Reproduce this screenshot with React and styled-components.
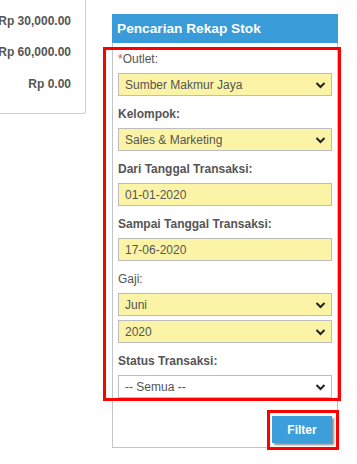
import React from 'react';
import styled, { createGlobalStyle } from 'styled-components';

const GlobalStyle = createGlobalStyle`
  body {
    margin: 0;
    background: #fff;
    font-family: "Liberation Sans", Arial, sans-serif;
  }
`;

const Page = styled.div`
  display: flex;
  align-items: flex-start;
  width: 357px;
  height: 464px;
  overflow: hidden;
`;

const Summary = styled.div`
  flex-shrink: 0;
  width: 125px;
  margin-left: -40px;
  height: 113px;
  border-right: 1px solid #cfcfcf;
  border-bottom: 1px solid #cfcfcf;
  border-bottom-right-radius: 3px;
`;

const Amount = styled.div`
  text-align: right;
  white-space: nowrap;
  padding-right: 14px;
  font-size: 12px;
  font-weight: 700;
  color: #555;
  line-height: 14px;
  margin-top: ${p => p.$top}px;
`;

const Panel = styled.div`
  flex-shrink: 0;
  margin-left: 26px;
  margin-top: 14px;
  width: 226px;
`;

const Header = styled.div`
  background: #3a9bd9;
  height: 29px;
  display: flex;
  align-items: center;
  padding-left: 5px;
  color: #fff;
  font-size: 13.7px;
  font-weight: 700;
`;

const Body = styled.div`
  border: 1px solid #c4c4c4;
  border-top: none;
  display: flex;
  flex-direction: column;
`;

const Highlight = styled.div`
  border: 3px solid #ff0000;
  margin: 4px -4px 0 -10px;
  padding: 1px 6px 0 12px;
  display: flex;
  flex-direction: column;
`;

const Field = styled.div`
  display: flex;
  flex-direction: column;
  margin-bottom: ${p => (p.$last ? 0 : 10)}px;
`;

const Label = styled.div`
  font-size: 12px;
  line-height: 16px;
  height: 16px;
  font-weight: ${p => (p.$bold ? 700 : 400)};
  color: #555;
  margin-bottom: 6px;
`;

const Star = styled.span`
  color: #e5532d;
`;

const SelectBox = styled.div`
  display: flex;
  align-items: center;
  justify-content: space-between;
  height: 23px;
  box-sizing: border-box;
  border: 1px solid #bdbdbd;
  background: ${p => (p.$plain ? '#fff' : '#fbf4a6')};
  padding: 0 5px 0 6px;
  font-size: 12px;
  color: #555;
  margin-bottom: ${p => p.$gap || 0}px;
`;

const TextInput = styled.input`
  height: 23px;
  box-sizing: border-box;
  border: 1px solid #bdbdbd;
  background: #fbf4a6;
  padding: 0 6px;
  font-family: inherit;
  font-size: 12px;
  color: #555;
  outline: none;
  width: 100%;
`;

const Footer = styled.div`
  display: flex;
  justify-content: flex-end;
`;

const ButtonFrame = styled.div`
  border: 3px solid #ff0000;
  margin: 9px -2px -3px 0;
  padding: 3px 4px 4px 2px;
  display: flex;
`;

const Button = styled.button`
  width: 60px;
  height: 27px;
  border: none;
  background: #3d9edc;
  color: #fff;
  font-family: inherit;
  font-size: 12px;
  font-weight: 700;
  box-shadow: 2px 2px 2px #8a8a8a;
  cursor: pointer;
`;

const Chevron = () => (
  <svg width="11" height="8" viewBox="0 0 11 8">
    <path d="M1.5 2 L5.5 6 L9.5 2" fill="none" stroke="#222" strokeWidth="2" />
  </svg>
);

const Select = ({ value, plain, gap }) => (
  <SelectBox $plain={plain} $gap={gap}>
    <span>{value}</span>
    <Chevron />
  </SelectBox>
);

const App = () => {
  return (
    <Page>
      <GlobalStyle />
      <Summary>
        <Amount $top={14}>Rp 30,000.00</Amount>
        <Amount $top={17}>Rp 60,000.00</Amount>
        <Amount $top={18}>Rp 0.00</Amount>
      </Summary>
      <Panel>
        <Header>Pencarian Rekap Stok</Header>
        <Body>
          <Highlight>
            <Field>
              <Label><Star>*</Star>Outlet:</Label>
              <Select value="Sumber Makmur Jaya" />
            </Field>
            <Field>
              <Label $bold>Kelompok:</Label>
              <Select value="Sales & Marketing" />
            </Field>
            <Field>
              <Label $bold>Dari Tanggal Transaksi:</Label>
              <TextInput readOnly value="01-01-2020" />
            </Field>
            <Field>
              <Label $bold>Sampai Tanggal Transaksi:</Label>
              <TextInput readOnly value="17-06-2020" />
            </Field>
            <Field>
              <Label>Gaji:</Label>
              <Select value="Juni" gap={4} />
              <Select value="2020" />
            </Field>
            <Field $last>
              <Label $bold>Status Transaksi:</Label>
              <Select value="-- Semua --" plain />
            </Field>
          </Highlight>
          <Footer>
            <ButtonFrame>
              <Button>Filter</Button>
            </ButtonFrame>
          </Footer>
        </Body>
      </Panel>
    </Page>
  );
};

export default App;
